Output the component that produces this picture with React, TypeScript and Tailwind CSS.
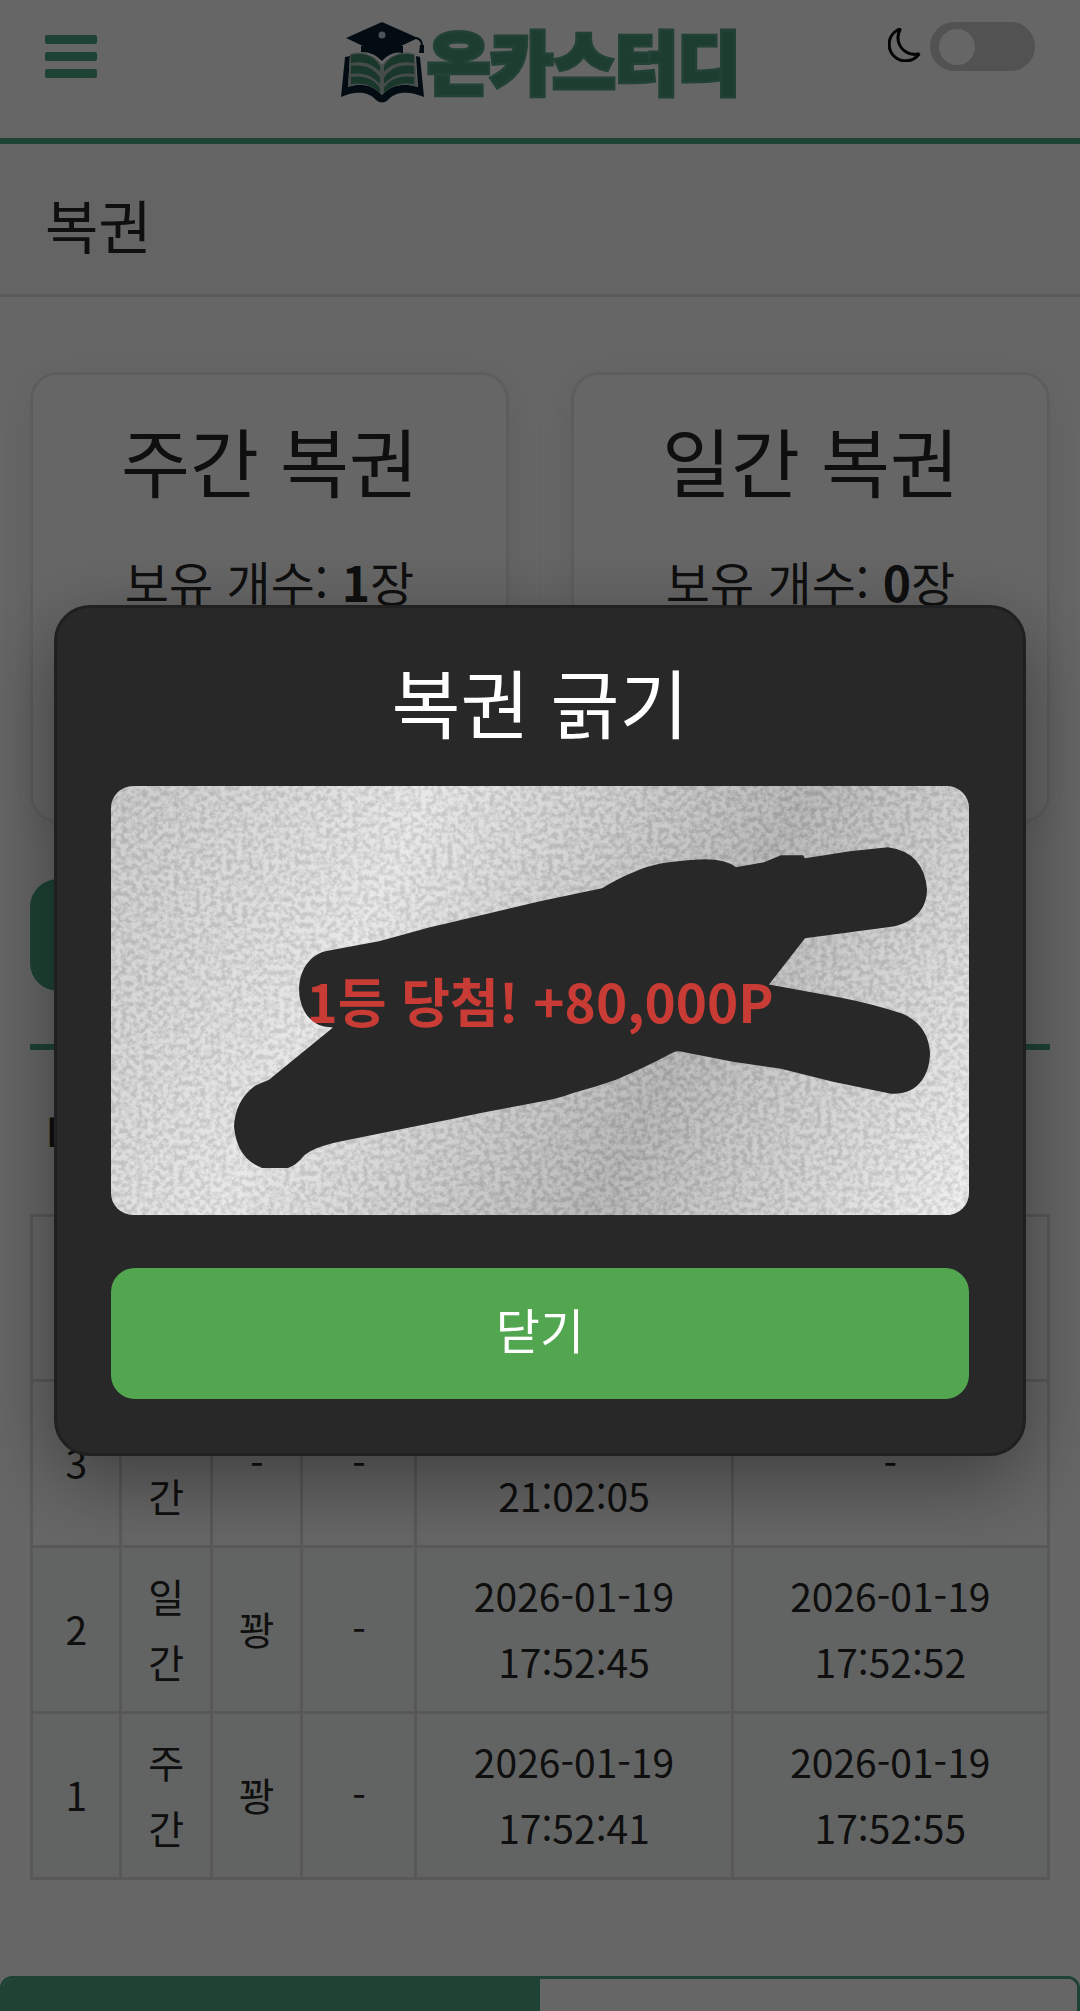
import { useState } from "react";
import { BsMoon } from "react-icons/bs";

type Ticket = {
  id: number;
  name: string;
  count: number;
};

type HistoryRow = {
  no: number;
  kind: string;
  result: string;
  prize: string;
  issuedAt: string;
  usedAt: string;
};

const TICKETS: Ticket[] = [
  { id: 1, name: "주간 복권", count: 1 },
  { id: 2, name: "일간 복권", count: 0 },
];

const HISTORY: HistoryRow[] = [
  { no: 3, kind: "주간", result: "-", prize: "-", issuedAt: "2026-01-19 21:02:05", usedAt: "-" },
  { no: 2, kind: "일간", result: "꽝", prize: "-", issuedAt: "2026-01-19 17:52:45", usedAt: "2026-01-19 17:52:52" },
  { no: 1, kind: "주간", result: "꽝", prize: "-", issuedAt: "2026-01-19 17:52:41", usedAt: "2026-01-19 17:52:55" },
];

const HEADERS = ["번호", "종류", "결과", "당첨", "지급일", "사용일"];

const CELL = "border-[3px] border-[#dddddd] px-4 pt-3 pb-4 break-all";
const DATE_CELL = "border-[3px] border-[#dddddd] px-10 pt-3 pb-4";

function LogoMark() {
  return (
    <svg viewBox="0 0 84 82" className="h-[82px] w-[84px]" aria-hidden="true">
      <path d="M5 35 L1 75 C16 68 30 70 36 78 Q42 83 48 78 C54 70 68 68 84 75 L80 35 L76 34 L78 65 C62 60 50 64 42 73 C34 64 22 60 8 65 L10 34 Z" fill="#06202f" />
      <path d="M10 32 L8 65 C22 60 34 64 42 73 C50 64 62 60 77 65 L75 32 C62 28 50 33 42 43 C34 33 22 28 10 32 Z" fill="#aebfb9" />
      <g fill="#3f8a6d">
        <path d="M11 33 C24 30 34 34 40 44 L40 50 C32 41 22 39 11 41 Z" />
        <path d="M11 44 C24 42 34 46 40 56 L40 62 C32 53 22 50 11 52 Z" />
        <path d="M11 55 C24 53 34 57 40 66 L40 71 C32 63 22 60 11 62 Z" />
        <path d="M74 33 C60 30 50 34 44 44 L44 50 C52 41 62 39 74 41 Z" />
        <path d="M74 44 C60 42 50 46 44 56 L44 62 C52 53 62 50 74 52 Z" />
        <path d="M74 55 C60 53 50 57 44 66 L44 71 C52 63 62 60 74 62 Z" />
      </g>
      <path d="M21 24 L63 24 L63 31 C54 29 48 33 42 39 C36 33 30 30 21 30 Z" fill="#06202f" />
      <path d="M42 0 L78 16 L42 33 L6 16 Z" fill="#06202f" />
      <path d="M76 16 Q82 17 82 24" fill="none" stroke="#06202f" strokeWidth="2" />
      <path d="M80 23 L84 23 L84 31 L79 31 Z" fill="#06202f" />
      <circle cx="42" cy="13" r="3.5" fill="#c3d0dc" />
    </svg>
  );
}

// Silver coating of the ticket, with the scratched-off area cut out of it
function ScratchFoil() {
  return (
    <svg viewBox="0 0 858 428" preserveAspectRatio="none" className="absolute inset-0 h-full w-full" aria-hidden="true">
      <defs>
        <linearGradient id="foil" gradientUnits="userSpaceOnUse" x1="0" y1="0" x2="858" y2="428">
          <stop offset="0" stopColor="#c6c6c6" />
          <stop offset="0.3" stopColor="#e6e6e6" />
          <stop offset="0.65" stopColor="#b2b2b2" />
          <stop offset="1" stopColor="#f0f0f0" />
        </linearGradient>
        <filter id="grain" x="0" y="0" width="100%" height="100%" colorInterpolationFilters="sRGB">
          <feTurbulence type="fractalNoise" baseFrequency="0.19" numOctaves="3" seed="11" />
          <feColorMatrix values="3 0 0 0 -0.9  3 0 0 0 -0.9  3 0 0 0 -0.9  0 0 0 0 0.11" />
        </filter>
        <mask id="scratched">
          <rect width="858" height="428" fill="#fff" />
          <path
            fill="#000"
            d="M218 164 C179 170 179 232 213 240 L222 241 L158 293 L144 299 Q124 314 123 340 Q126 372 151 381 L177 381 Q186 378 192 370 Q200 361 228 355 L371 326 L429 315 Q447 312 463 306 Q485 300 505 293 Q530 283 562 266 Q566 264 570 265 L622 275 L670 282 L722 295 L780 307 C807 309 819 288 819 266 Q817 238 791 227 Q760 217 729 211 L658 198 L694 152 L784 140 Q816 131 816 103 Q813 66 777 61 L739 65 L694 72 L692 69 L670 69 L653 76 L625 81 Q615 73 594 73 Q545 75 525 85 Q509 91 491 102 L429 115 L319 141 L268 155 Z"
          />
        </mask>
      </defs>
      <g mask="url(#scratched)">
        <rect width="858" height="428" fill="url(#foil)" />
        <rect width="858" height="428" filter="url(#grain)" />
      </g>
    </svg>
  );
}

export default function App() {
  const [open, setOpen] = useState(true);
  const [dark, setDark] = useState(false);

  return (
    <div
      lang="ko"
      className="flex h-screen flex-col overflow-hidden bg-white font-['Noto_Sans_CJK_KR','Noto_Sans',sans-serif] text-[#262626]"
    >
      <header className="grid shrink-0 grid-cols-[1fr_auto_1fr] items-start border-b-[6px] border-[#4ba582] px-[45px] pb-14">
        <button type="button" aria-label="메뉴" className="mt-[35px] flex w-[52px] flex-col gap-2">
          <span className="h-[9px] rounded-xs bg-[#4ba582]" />
          <span className="h-[9px] rounded-xs bg-[#4ba582]" />
          <span className="h-[9px] rounded-xs bg-[#4ba582]" />
        </button>
        <a href="#home" className="mt-[22px] flex h-[60px] items-start gap-1">
          <LogoMark />
          <span className="text-[68px] leading-[76px] font-black text-[#479a79] [paint-order:stroke] [-webkit-text-stroke:5px_#56a585]">
            온카스터디
          </span>
        </a>
        <label className="mt-[22px] flex items-center gap-2 justify-self-end">
          <BsMoon className="mb-1 size-[34px] stroke-current stroke-[0.4] text-black" />
          <input
            type="checkbox"
            aria-label="다크 모드"
            checked={dark}
            onChange={() => setDark(!dark)}
            className="peer sr-only"
          />
          <span className="flex h-[49px] w-[105px] items-center rounded-full bg-[#cccccc] px-[9px] peer-checked:justify-end">
            <span className="size-9 rounded-full bg-white" />
          </span>
        </label>
      </header>

      <div className="shrink-0 border-b-[3px] border-[#e2e2e2] bg-[#fafafa] px-[45px] pt-10 pb-[30px]">
        <h1 className="text-[58px] leading-[80px]">복권</h1>
      </div>

      <main className="flex shrink-0 flex-col px-[30px] pt-[75px]">
        <div className="grid grid-cols-2 gap-[62px]">
          {TICKETS.map((ticket) => (
            <section
              key={ticket.id}
              className="flex flex-col items-center rounded-[28px] border-[3px] border-[#e9e9e9] bg-white px-[45px] pt-10 pb-12 shadow-[0_6px_40px_rgba(0,0,0,0.08)]"
            >
              <h2 className="text-[75px] leading-[90px] whitespace-nowrap">{ticket.name}</h2>
              <p className="mt-10 text-[48px] leading-[72px] whitespace-nowrap">
                보유 개수: <b>{ticket.count}</b>장
              </p>
              <button
                type="button"
                disabled={ticket.count === 0}
                onClick={() => setOpen(true)}
                className="mt-6 h-[131px] w-full rounded-3xl bg-[#4ba582] text-[48px] text-white"
              >
                긁기
              </button>
            </section>
          ))}
        </div>

        <button type="button" className="mt-14 h-28 w-1/2 rounded-[28px] bg-[#4ba582] text-[48px] text-white">
          복권 안내
        </button>
        <hr className="mt-[53px] border-t-[6px] border-[#4ba582]" />
        <h3 className="mt-10 pl-4 text-[48px] leading-[84px] font-bold">내 복권 기록</h3>

        <table className="mt-10 w-full table-fixed border-collapse text-center text-[39px] leading-[66px]">
          <colgroup>
            <col className="w-[8.8%]" />
            <col className="w-[8.9%]" />
            <col className="w-[8.9%]" />
            <col className="w-[11.2%]" />
            <col className="w-[31.1%]" />
            <col className="w-[31.1%]" />
          </colgroup>
          <thead>
            <tr className="h-[165px]">
              {HEADERS.map((header) => (
                <th key={header} className={`${CELL} font-bold`}>
                  {header}
                </th>
              ))}
            </tr>
          </thead>
          <tbody>
            {HISTORY.map((row) => (
              <tr key={row.no} className={row.result === "꽝" ? "h-[166px] bg-[#f5faf8]" : "h-[166px]"}>
                <td className={CELL}>{row.no}</td>
                <td className={CELL}>{row.kind}</td>
                <td className={CELL}>{row.result}</td>
                <td className={CELL}>{row.prize}</td>
                <td className={DATE_CELL}>{row.issuedAt}</td>
                <td className={DATE_CELL}>{row.usedAt}</td>
              </tr>
            ))}
          </tbody>
        </table>
      </main>

      <nav className="mt-24 grid h-28 shrink-0 grid-cols-2 overflow-hidden rounded-t-xl border-[3px] border-[#4ba582]">
        <button type="button" aria-label="최신글" className="bg-[#4ba582]" />
        <button type="button" aria-label="인기글" className="bg-white" />
      </nav>

      {open && (
        <div className="fixed inset-0 flex items-center justify-center bg-black/60 pt-[50px]">
          <div
            role="dialog"
            aria-modal="true"
            aria-labelledby="scratch-title"
            className="w-[90%] rounded-[36px] border-[3px] border-[#202020] bg-[#282828] px-[54px] pt-12 pb-[54px] text-center text-white shadow-[0_24px_80px_rgba(0,0,0,0.4)]"
          >
            <h2 id="scratch-title" className="text-[75px] leading-[90px]">
              복권 긁기
            </h2>
            <div className="relative mt-10 flex aspect-[2/1] items-center justify-center overflow-hidden rounded-[22px]">
              <p className="text-[53px] leading-none font-bold whitespace-nowrap text-[#c93c36]">1등 당첨! +80,000P</p>
              <ScratchFoil />
            </div>
            <button
              type="button"
              onClick={() => setOpen(false)}
              className="mt-[53px] h-[131px] w-full rounded-3xl bg-[#53a650] pb-3 text-[48px] leading-none"
            >
              닫기
            </button>
          </div>
        </div>
      )}
    </div>
  );
}
